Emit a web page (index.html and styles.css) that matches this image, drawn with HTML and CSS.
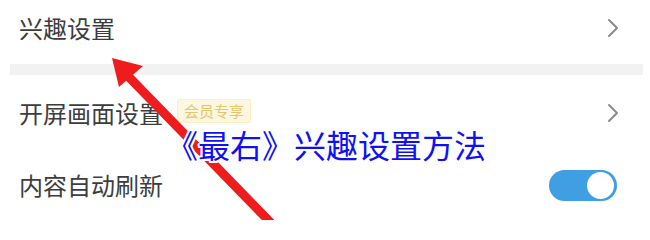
FILE: index.html
```html
<!DOCTYPE html>
<html lang="zh-CN">
<head>
<meta charset="utf-8">
<title>兴趣设置</title>
<link rel="stylesheet" href="styles.css">
</head>
<body>
<div class="screen">
  <div class="row row-first">
    <span class="label">兴趣设置</span>
    <svg class="chev" viewBox="0 0 12 20" width="12" height="20"><path d="M2 2 L10 10 L2 18" fill="none" stroke="#8a8a8a" stroke-width="2" stroke-linecap="round" stroke-linejoin="round"/></svg>
  </div>
  <div class="band"></div>
  <div class="row row-second">
    <div class="left">
      <span class="label">开屏画面设置</span>
      <span class="badge">会员专享</span>
    </div>
    <svg class="chev" viewBox="0 0 12 20" width="12" height="20"><path d="M2 2 L10 10 L2 18" fill="none" stroke="#8a8a8a" stroke-width="2" stroke-linecap="round" stroke-linejoin="round"/></svg>
  </div>
  <div class="row row-third">
    <span class="label">内容自动刷新</span>
    <span class="toggle"><span class="knob"></span></span>
  </div>

  <svg class="arrow" viewBox="0 0 650 220" width="650" height="220">
    <line x1="124" y1="72" x2="272" y2="224" stroke="#ee1c1c" stroke-width="9" stroke-linecap="round"/>
    <polygon points="112,58 143,66 119,87" fill="#ee1c1c"/>
  </svg>

  <div class="title">《最右》兴趣设置方法</div>
</div>
</body>
</html>
```

FILE: styles.css
```css
html, body {
  margin: 0;
  padding: 0;
  background: #ffffff;
}
body {
  font-family: "Noto Sans CJK SC", "Noto Sans", sans-serif;
  color: #3b3b3b;
}
.screen {
  position: relative;
  width: 650px;
  height: 220px;
  overflow: hidden;
}
.row {
  display: flex;
  align-items: center;
  justify-content: space-between;
  padding: 0 33px 0 19px;
}
.row-first {
  height: 64px;
  align-items: flex-start;
}
.row-first .label {
  margin-top: 13px;
}
.row-first .chev {
  margin-top: 18px;
}
.band {
  height: 11px;
  margin: 0 7px 0 10px;
  background: #f2f2f2;
}
.row-second {
  height: 75px;
}
.row-third {
  height: 70px;
}
.left {
  display: flex;
  align-items: center;
  gap: 14px;
}
.label {
  font-size: 24px;
  line-height: 30px;
  color: #3d3d3d;
}
.badge {
  font-size: 15px;
  line-height: 22px;
  padding: 0 6px;
  background: #fdf7df;
  color: #e5c56e;
  border: 1px solid #fbefc6;
  border-radius: 2px;
  margin-top: -4px;
}
.chev {
  display: block;
  margin-right: -2px;
}
.toggle {
  position: relative;
  width: 68px;
  height: 31px;
  border-radius: 16px;
  background: #3f9fe2;
  margin-right: 0;
}
.knob {
  position: absolute;
  right: 3px;
  top: 2px;
  width: 27px;
  height: 27px;
  border-radius: 50%;
  background: #ffffff;
}
.arrow {
  position: absolute;
  left: 0;
  top: 0;
}
.title {
  position: absolute;
  left: 166px;
  top: 127px;
  font-size: 32px;
  line-height: 34px;
  color: #1010f5;
  text-shadow:
    -1.5px -1.5px 0 #fff, 1.5px -1.5px 0 #fff,
    -1.5px 1.5px 0 #fff, 1.5px 1.5px 0 #fff,
    0 -2px 0 #fff, 0 2px 0 #fff, -2px 0 0 #fff, 2px 0 0 #fff;
}
```
